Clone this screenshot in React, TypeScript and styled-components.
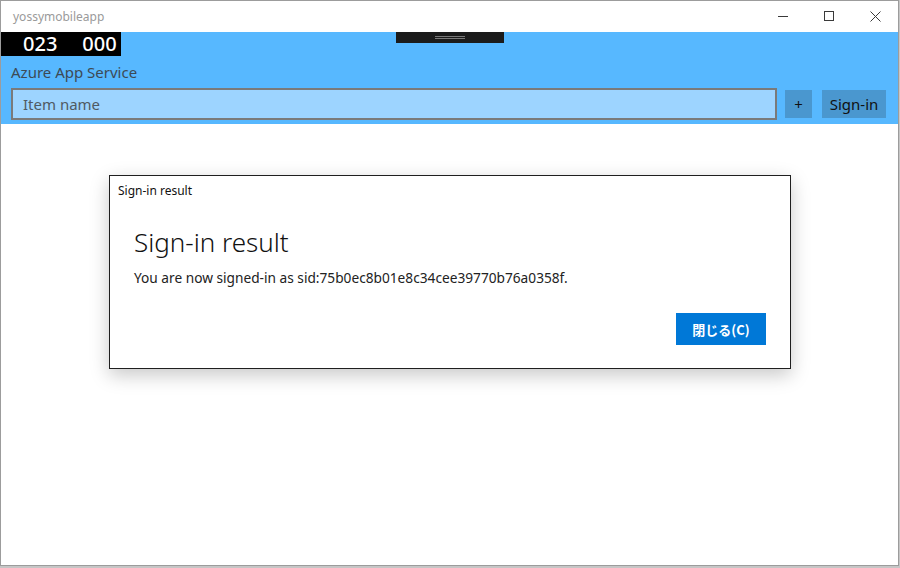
import React from "react";
import styled, { createGlobalStyle } from "styled-components";

const Global = createGlobalStyle`
  html, body { margin: 0; padding: 0; }
  body {
    background: #c6c6c6;
    width: 900px;
    height: 568px;
    overflow: hidden;
    font-family: "Segoe UI", "Noto Sans", "Noto Sans CJK JP", sans-serif;
  }
`;

const Window = styled.div`
  position: relative;
  width: 899px;
  height: 566px;
  box-sizing: border-box;
  border: 1px solid #9c9c9c;
  background: #ffffff;
  display: flex;
  flex-direction: column;
`;

const TitleBar = styled.div`
  height: 31px;
  display: flex;
  align-items: center;
  padding-left: 12px;
`;

const AppTitle = styled.span`
  flex: 1;
  font-size: 12px;
  color: #9a9a9a;
`;

const CaptionButton = styled.div`
  width: 46px;
  height: 31px;
  display: flex;
  align-items: center;
  justify-content: center;
  color: #3a3a3a;
`;

const Header = styled.div`
  position: relative;
  background: #57b8ff;
  padding: 30px 12px 4px 10px;
  display: flex;
  flex-direction: column;
  gap: 6px;
`;

const ServiceName = styled.div`
  font-size: 15px;
  line-height: 20px;
  color: #3d4a55;
`;

const InputRow = styled.div`
  display: flex;
  align-items: center;
  gap: 8px;
`;

const ItemInput = styled.div`
  flex: 1;
  height: 32px;
  box-sizing: border-box;
  border: 2px solid #7a7a7a;
  background: #9dd4ff;
  display: flex;
  align-items: center;
  padding-left: 10px;
  font-size: 15px;
  color: #4f5a63;
`;

const HeaderButton = styled.div<{ $w: number }>`
  width: ${(p) => p.$w}px;
  height: 28px;
  background: #4a97cf;
  color: #111;
  font-size: 15px;
  display: flex;
  align-items: center;
  justify-content: center;
  margin-left: ${(p) => (p.$w > 40 ? 2 : 0)}px;
`;

const Counter = styled.div`
  position: absolute;
  left: 0;
  top: 0;
  width: 120px;
  height: 24px;
  background: #000;
  color: #fff;
  font-family: "Noto Sans", sans-serif;
  font-weight: 500;
  font-size: 20px;
  line-height: 24px;
  display: flex;
  gap: 25px;
  padding-left: 22px;
  box-sizing: border-box;
`;

const GrabTab = styled.div`
  position: absolute;
  left: 395px;
  top: 0;
  width: 108px;
  height: 11px;
  background: #1b1b1b;
  display: flex;
  flex-direction: column;
  align-items: center;
  justify-content: center;
  gap: 1px;
`;

const GrabLine = styled.div`
  width: 30px;
  height: 1px;
  background: #7a7a7a;
`;

const Body = styled.div`
  flex: 1;
`;

const Dialog = styled.div`
  position: absolute;
  left: 108px;
  top: 174px;
  width: 682px;
  box-sizing: border-box;
  border: 1px solid #1f1f1f;
  background: #fff;
  box-shadow: 0 6px 18px rgba(0, 0, 0, 0.22);
`;

const DialogCaption = styled.div`
  height: 30px;
  line-height: 30px;
  padding-left: 8px;
  font-size: 12px;
  color: #111;
`;

const DialogContent = styled.div`
  padding: 20px 24px 23px 24px;
  display: flex;
  flex-direction: column;
`;

const DialogHeading = styled.div`
  font-size: 26px;
  font-weight: 300;
  line-height: 32px;
  color: #111;
`;

const DialogText = styled.div`
  margin-top: 10px;
  font-size: 13.7px;
  line-height: 20px;
  color: #222;
`;

const DialogActions = styled.div`
  margin-top: 25px;
  display: flex;
  justify-content: flex-end;
`;

const PrimaryButton = styled.div`
  width: 90px;
  height: 32px;
  background: #0078d7;
  color: #fff;
  font-family: "Noto Sans CJK JP", sans-serif;
  font-weight: 700;
  font-size: 13px;
  display: flex;
  align-items: center;
  justify-content: center;
`;

export default function App() {
  return (
    <>
      <Global />
      <Window>
        <TitleBar>
          <AppTitle>yossymobileapp</AppTitle>
          <CaptionButton>
            <svg width="11" height="11" viewBox="0 0 11 11">
              <line x1="0" y1="5.5" x2="10" y2="5.5" stroke="currentColor" strokeWidth="1" />
            </svg>
          </CaptionButton>
          <CaptionButton>
            <svg width="11" height="11" viewBox="0 0 11 11">
              <rect x="0.5" y="0.5" width="9" height="9" fill="none" stroke="currentColor" strokeWidth="1" />
            </svg>
          </CaptionButton>
          <CaptionButton>
            <svg width="11" height="11" viewBox="0 0 11 11">
              <path d="M0.5 0.5 L10.5 10.5 M10.5 0.5 L0.5 10.5" stroke="currentColor" strokeWidth="1" />
            </svg>
          </CaptionButton>
        </TitleBar>
        <Header>
          <Counter>
            <span>023</span>
            <span>000</span>
          </Counter>
          <GrabTab>
            <GrabLine />
            <GrabLine />
          </GrabTab>
          <ServiceName>Azure App Service</ServiceName>
          <InputRow>
            <ItemInput>Item name</ItemInput>
            <HeaderButton $w={27}>+</HeaderButton>
            <HeaderButton $w={64}>Sign-in</HeaderButton>
          </InputRow>
        </Header>
        <Body />
        <Dialog>
          <DialogCaption>Sign-in result</DialogCaption>
          <DialogContent>
            <DialogHeading>Sign-in result</DialogHeading>
            <DialogText>You are now signed-in as sid:75b0ec8b01e8c34cee39770b76a0358f.</DialogText>
            <DialogActions>
              <PrimaryButton>閉じる(C)</PrimaryButton>
            </DialogActions>
          </DialogContent>
        </Dialog>
      </Window>
    </>
  );
}
